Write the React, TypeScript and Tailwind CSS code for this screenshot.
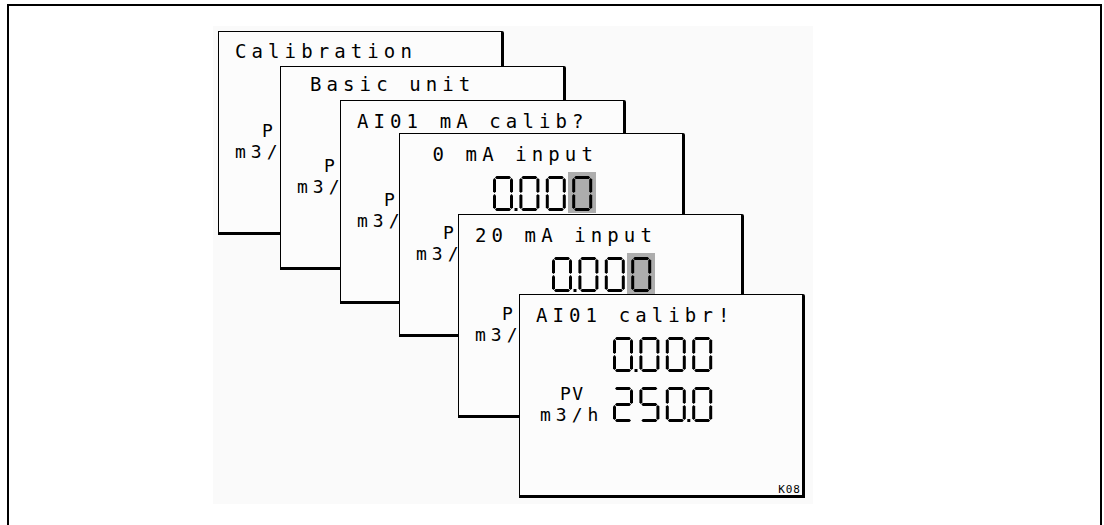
import React from 'react'

const SEG: Record<string, string> = {
    a: '2,1.5 3.5,0 16.5,0 18,1.5 16.5,3 3.5,3',
    b: '18.5,2 20,3.5 20,15.5 18.5,17 17,15.5 17,3.5',
    c: '18.5,18 20,19.5 20,31.5 18.5,33 17,31.5 17,19.5',
    d: '2,33.5 3.5,32 16.5,32 18,33.5 16.5,35 3.5,35',
    e: '1.5,18 3,19.5 3,31.5 1.5,33 0,31.5 0,19.5',
    f: '1.5,2 3,3.5 3,15.5 1.5,17 0,15.5 0,3.5',
    g: '2,17.5 3.5,16 16.5,16 18,17.5 16.5,19 3.5,19',
}

const DIGITS: Record<string, string> = {
    '0': 'abcdef',
    '2': 'abdeg',
    '5': 'acdfg',
}

function SevenSeg({ value, hl }: { value: string; hl?: boolean }) {
    const parts: React.ReactNode[] = []
    let i = -1
    value.split('').forEach((ch, k) => {
        if (ch === '.') {
            parts.push(<rect key={k} x={2 + i * 26.4 + 21.5} y={36} width={3} height={3} fill="#000" />)
            return
        }
        i++
        const x = 2 + i * 26.4
        parts.push(
            <g key={k} transform={`translate(${x} 4)`}>
                {DIGITS[ch].split('').map((s) => (
                    <polygon key={s} points={SEG[s]} fill="#000" />
                ))}
            </g>
        )
    })
    return (
        <svg width="110" height="42" viewBox="0 0 110 42" className="block">
            {hl && <rect x="77" y="0" width="28" height="41" fill="#adadad" />}
            {parts}
        </svg>
    )
}

const font = "font-['DejaVu_Sans_Mono',monospace]"

// screens further back: only the part left of the next screen shows
function Screen({ pos, title, titleCls, row1 }: {
    pos: string
    title: string
    titleCls: string
    row1?: React.ReactNode
}) {
    return (
        <div className={`absolute ${pos} w-[286px] h-[204px] bg-[#fcfcfc] border-black border-t border-l border-r-[3px] border-b-[3px] rounded-tr-[2px] flex flex-col ${font} text-black`}>
            <div className={`h-[30px] text-[19px] leading-[20px] tracking-[5.1px] whitespace-pre ${titleCls}`}>{title}</div>
            <div className="mt-[8px] h-[42px] pl-[91px]">{row1}</div>
            <div className="mt-[8px] h-[42px] flex">
                <div className="w-[60px] text-[18px] leading-[21px] whitespace-nowrap">
                    <div className="pl-[43px]">P</div>
                    <div className="pl-[16px] tracking-[5px]">m3/</div>
                </div>
            </div>
        </div>
    )
}

export default function App() {
    return (
        <div className="w-[1104px] h-[525px] overflow-hidden bg-white">
            <div className="ml-[7px] mt-[4px] w-[1095px] h-[540px] border-2 border-black">
                <div className="ml-[204px] mt-[20px] w-[600px] h-[478px] bg-[#fafafa] relative">
                    <Screen pos="left-[5px] top-[5px]" title="Calibration" titleCls="pl-[16px] pt-[9px]" />
                    <Screen pos="left-[67px] top-[40px]" title="Basic unit" titleCls="pl-[29px] pt-[7px]" />
                    <Screen pos="left-[127px] top-[74px]" title="AI01 mA calib?" titleCls="pl-[16px] pt-[10px]" />
                    <Screen pos="left-[186px] top-[107px]" title=" 0 mA input" titleCls="pl-[16px] pt-[10px]"
                        row1={<SevenSeg value="0.000" hl />} />
                    <Screen pos="left-[245px] top-[188px]" title="20 mA input" titleCls="pl-[16px] pt-[10px]"
                        row1={<SevenSeg value="0.000" hl />} />
                    <div className={`absolute left-[306px] top-[268px] w-[286px] h-[204px] bg-[#fcfcfc] border-black border-t border-l border-r-[3px] border-b-[3px] rounded-tr-[2px] flex flex-col ${font} text-black`}>
                        <div className="h-[30px] pl-[16px] pt-[10px] text-[19px] leading-[20px] tracking-[5.1px] whitespace-pre">AI01 calibr!</div>
                        <div className="mt-[8px] h-[42px] pl-[91px]">
                            <SevenSeg value="0.000" />
                        </div>
                        <div className="mt-[8px] h-[42px] flex">
                            <div className="w-[91px] text-[18px] leading-[21px]">
                                <div className="pl-[40px] tracking-[1.5px]">PV</div>
                                <div className="pl-[20px] tracking-[5px]">m3/h</div>
                            </div>
                            <SevenSeg value="250.0" />
                        </div>
                        <div className="mt-auto self-end pr-[1px] text-[11px] leading-[11px] tracking-[1px]">K08</div>
                    </div>
                </div>
            </div>
        </div>
    )
}
